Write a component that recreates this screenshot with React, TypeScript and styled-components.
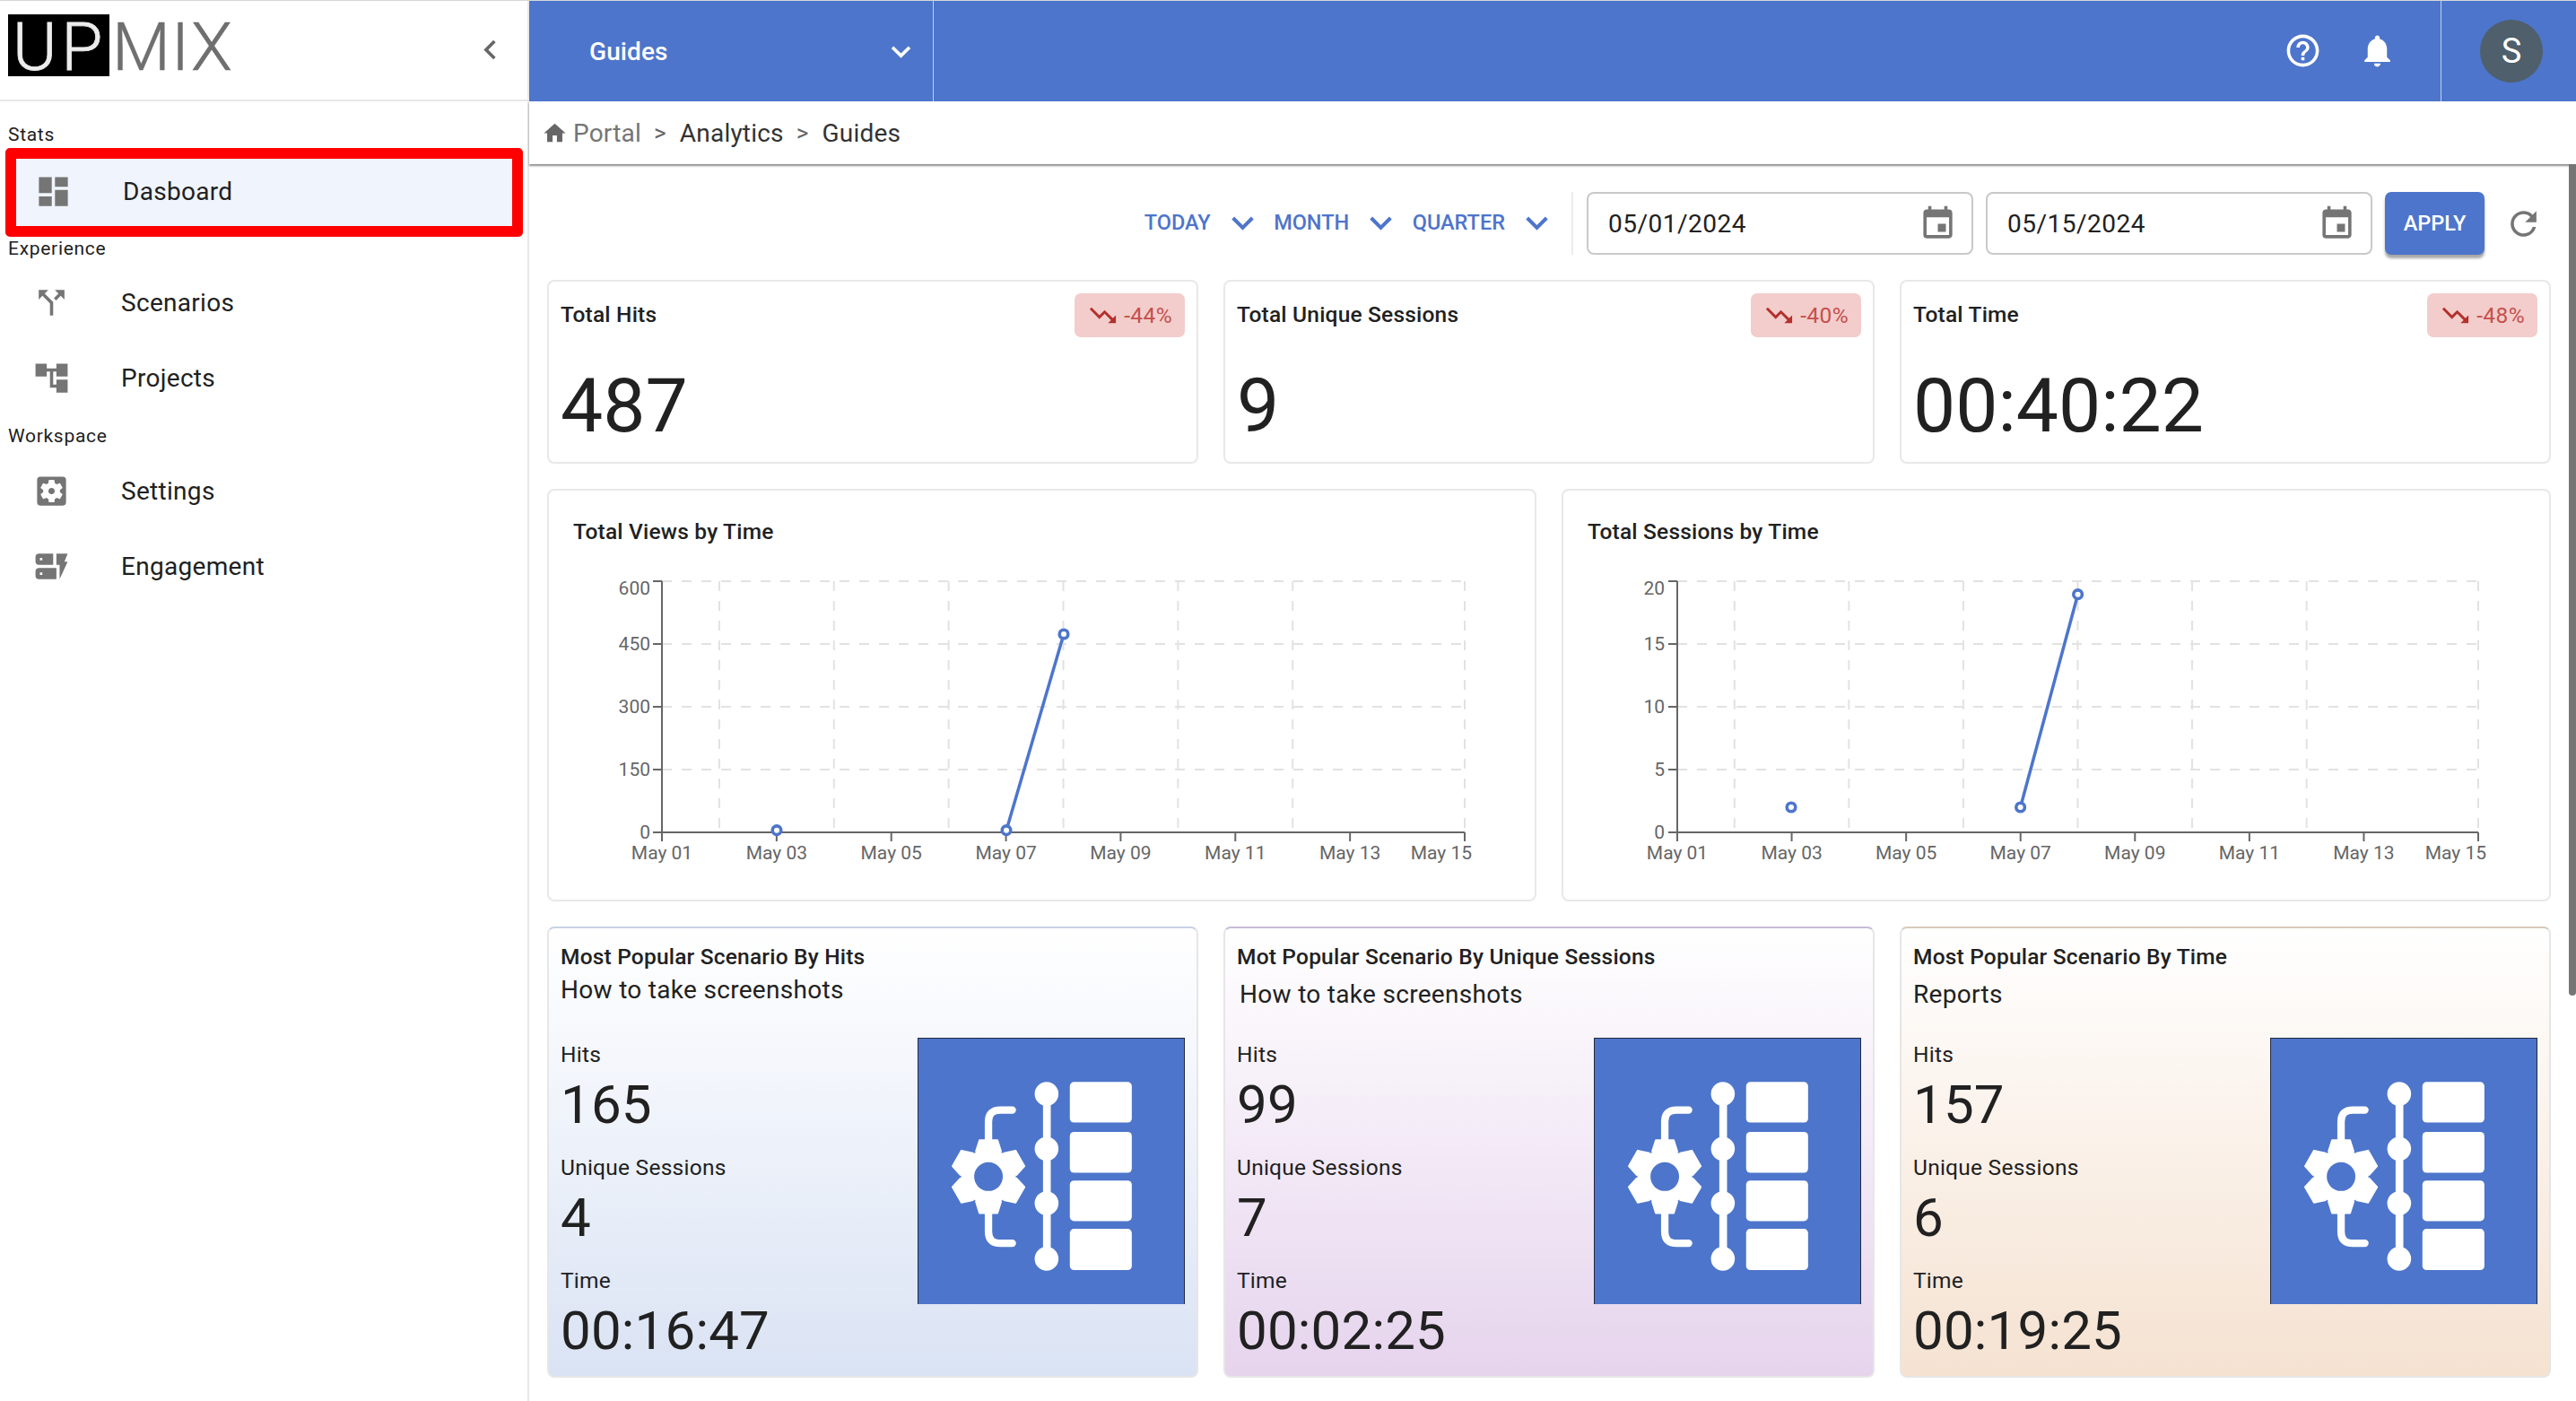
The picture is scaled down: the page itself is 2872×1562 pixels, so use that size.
import React from "react";
import styled, { createGlobalStyle } from "styled-components";
import {
  MdDashboard, MdCallSplit, MdAccountTree, MdSettingsApplications, MdDynamicForm,
  MdHelpOutline, MdNotifications, MdKeyboardArrowDown, MdExpandMore, MdChevronLeft,
  MdHome, MdEvent, MdRefresh, MdTrendingDown,
} from "react-icons/md";

const BLUE = "#4d75cb";

const Global = createGlobalStyle`
  html, body { margin: 0; padding: 0; background: #fff; overflow: hidden; }
  body { font-family: Roboto, "Liberation Sans", sans-serif; color: #212121; }
  * { box-sizing: border-box; }
`;

const Page = styled.div`
  width: 2872px; height: 1562px; display: grid; grid-template-columns: 590px 1fr;
  position: relative; overflow: hidden;
  &::before { content: ""; position: absolute; left: 0; right: 0; top: 0; height: 1px; background: #d6d6d6; z-index: 3; }
`;

const Sidebar = styled.aside`
  border-right: 2px solid #e8e8e8; display: flex; flex-direction: column;
`;
const Brand = styled.div`
  height: 113px; border-bottom: 2px solid #e6e6e6; display: flex; align-items: flex-start;
  justify-content: space-between; padding: 16px 20px 0 9px;
`;
const LogoMark = styled.div`
  display: flex; height: 69px; font-size: 75px; font-weight: 300; line-height: 73px;
`;
const LogoUp = styled.span`
  width: 113px; height: 69px; background: #000; color: #ececec; padding-left: 5px; letter-spacing: 5px; -webkit-text-stroke: .8px #ececec;
`;
const LogoMix = styled.span`
  color: #6f6f6f; margin-left: 3px; letter-spacing: 1.2px; -webkit-text-stroke: .6px #6f6f6f;
`;
const Collapse = styled.span`
  color: #666; margin-top: 18px; display: flex;
  svg { width: 43px; height: 43px; }
`;
const SectionLabel = styled.div<{ $top: number }>`
  font-size: 21px; line-height: 24px; letter-spacing: 0.7px; padding-left: 9px; margin-top: ${p => p.$top}px; color: #212121;
`;
const NavItem = styled.div`
  height: 84px; display: flex; align-items: center; padding-left: 36px; font-size: 28px; letter-spacing: 0.3px; gap: 56px; color: #212121;
  svg { width: 43px; height: 43px; color: #757575; display: block; }
`;
const ActiveNavItem = styled(NavItem)`
  height: 99px; width: 577px; margin: 3px 0 0 6px; border: 12px solid #fe0000; border-radius: 5px;
  background: #f0f4fc; padding: 0 0 2px 20px;
`;
const ItemsTop = styled.div<{ $top: number }>` margin-top: ${p => p.$top}px; `;

const Main = styled.main`
  display: flex; flex-direction: column; position: relative; min-width: 0;
`;
const TopBar = styled.header`
  height: 113px; background: ${BLUE}; display: flex; align-items: stretch; color: #fff;
  svg { display: block; }
`;
const ContextSelect = styled.div`
  width: 451px; border-right: 1px solid rgba(255,255,255,.65); display: flex; align-items: center;
  justify-content: space-between; padding: 2px 14px 0 67px; font-size: 28px; font-weight: 500; letter-spacing: .1px;
  svg { width: 43px; height: 43px; }
`;
const Actions = styled.div`
  margin-left: auto; display: flex; align-items: center; gap: 40px; padding-right: 49px;
  svg { width: 43px; height: 43px; }
`;
const UserBox = styled.div`
  width: 151px; border-left: 1px solid rgba(255,255,255,.65); display: flex; align-items: center; padding-left: 43px;
`;
const Avatar = styled.div`
  width: 70px; height: 70px; border-radius: 50%; background: #4f5f6b; display: flex; align-items: center; justify-content: center;
  font-size: 38px; color: #fff;
`;
const Breadcrumb = styled.nav`
  height: 70px; display: flex; align-items: center; padding-left: 14px; font-size: 28px; color: #333;
  box-shadow: 0 2px 2px rgba(0,0,0,.45); position: relative; z-index: 1; letter-spacing: .2px;
  svg { width: 29px; height: 29px; color: #666; display: block; margin-right: 6px; }
`;
const Crumb = styled.span<{ $muted?: boolean }>` color: ${p => (p.$muted ? "#757575" : "#333")}; `;
const Sep = styled.span` color: #666; margin: 0 15px 0 14px; font-size: 26px; `;

const Thumb = styled.div`
  position: absolute; right: 0; top: 183px; width: 8px; height: 927px; background: #757575; border-radius: 0 0 4px 4px; z-index: 2;
`;

const Content = styled.div`
  padding: 0 28px 0 20px; display: flex; flex-direction: column; gap: 28px;
`;
const Toolbar = styled.div`
  height: 101px; padding-top: 31px; margin-bottom: 28px; display: flex; justify-content: flex-end; align-items: stretch;
`;
const PeriodGroup = styled.div` display: flex; align-items: center; gap: 10.5px; padding-bottom: 2px; `;
const PeriodButton = styled.div`
  display: flex; align-items: center; gap: 11px; color: ${BLUE}; font-size: 23.5px; font-weight: 500;
  svg { width: 49px; height: 49px; display: block; }
`;
const VDivider = styled.div` width: 2px; background: #ececec; margin: 0 15px 0 14px; `;
const DateField = styled.div`
  width: 431px; height: 70px; border: 2px solid #c9c9c9; border-radius: 8px; margin-right: 14px; display: flex; align-items: center;
  justify-content: space-between; padding: 0 16px 0 22px; font-size: 28px; letter-spacing: .5px; color: #212121;
  svg { width: 43px; height: 43px; color: #757575; display: block; }
`;
const ApplyButton = styled.div`
  width: 111px; height: 70px; background: ${BLUE}; color: #fff; border-radius: 7px; font-size: 23.5px; font-weight: 500;
  display: flex; align-items: center; justify-content: center; padding-bottom: 1px;
  box-shadow: 0 4px 3px rgba(0,0,0,.35);
`;
const RefreshButton = styled.div`
  display: flex; align-items: center; margin: 0 9px 0 22px; color: #757575;
  svg { width: 43px; height: 43px; display: block; }
`;

const Row3 = styled.section` display: grid; grid-template-columns: repeat(3, 1fr); gap: 28px; `;
const Row2 = styled.section` display: grid; grid-template-columns: repeat(2, 1fr); gap: 28px; `;

const Card = styled.div`
  border: 2px solid #e8e8e8; border-radius: 8px; background: #fff;
`;
const StatCard = styled(Card)` height: 205px; padding: 13px 13px 0; `;
const StatHead = styled.div` display: flex; justify-content: space-between; align-items: flex-start; height: 49px; `;
const CardTitle = styled.div` font-size: 24.5px; line-height: 29px; font-weight: 500; color: #212121; letter-spacing: .2px; `;
const StatTitle = styled(CardTitle)` padding-top: 9px; `;
const Badge = styled.div`
  height: 49px; padding: 0 14px; border-radius: 7px; background: #f2cdcc; display: flex; align-items: center; gap: 6px;
  color: #c5504c; font-size: 24.5px; letter-spacing: .4px;
  svg { width: 35px; height: 35px; color: #b3302c; display: block; }
`;
const BigNumber = styled.div` font-size: 84px; line-height: 98px; margin-top: 28px; color: #212121; `;

const ChartCard = styled(Card)` height: 460px; `;
const ChartTitle = styled(CardTitle)` padding: 31px 0 0 27px; `;
const ChartFrame = styled.svg` display: block; width: 1097px; height: 340px; margin-top: 34px; overflow: visible; `;

const ScenarioCard = styled(Card)<{ $end: string; $edge: string }>`
  height: 503px; padding: 17px 13px 0; background: linear-gradient(180deg, #fff 0%, ${p => p.$end} 100%); border-color: #e6e6e6; border-top-color: ${p => p.$edge};
`;
const ScenarioHead = styled.div` height: 105px; `;
const Subtitle = styled.div<{ $drop: number; $nudge: number }>`
  font-size: 28px; line-height: 33px; margin-top: ${p => p.$drop}px; margin-left: ${p => p.$nudge}px; letter-spacing: .3px; color: #212121;
`;
const ScenarioBody = styled.div` display: flex; justify-content: space-between; align-items: flex-start; `;
const Metrics = styled.div` padding-top: 4px; `;
const MetricLabel = styled.div` font-size: 24.5px; line-height: 29px; letter-spacing: .25px; color: #212121; `;
const MetricValue = styled.div` font-size: 60px; line-height: 69px; margin: 7px 0 21px; letter-spacing: .2px; color: #212121; `;
const Graphic = styled.svg`
  width: 298px; height: 297px; display: block; background: ${BLUE}; border: 1px solid #232a3a; border-bottom: none; flex: none;
`;

const Gear = () => {
  const teeth = [0, 60, 120, 180, 240, 300];
  return (
    <g fill="#fff">
      {teeth.map(a => (
        <polygon key={a} points="-42,-84 -30,-122 30,-122 42,-84" transform={`translate(305 515) rotate(${a})`} strokeLinejoin="round" stroke="#fff" strokeWidth="6" />
      ))}
      <circle cx="305" cy="515" r="92" />
      <circle cx="305" cy="515" r="48" fill={BLUE} />
    </g>
  );
};

const ScenarioGraphic = () => (
  <Graphic viewBox="70 53 891 889" preserveAspectRatio="none">
    <g fill="#fff">
      <rect x="578" y="198" width="208" height="136" rx="14" />
      <rect x="578" y="365" width="208" height="137" rx="14" />
      <rect x="578" y="528" width="208" height="136" rx="14" />
      <rect x="578" y="690" width="208" height="138" rx="14" />
      <rect x="488" y="238" width="26" height="552" />
      <circle cx="500" cy="238" r="40" />
      <circle cx="500" cy="422" r="40" />
      <circle cx="500" cy="604" r="40" />
      <circle cx="500" cy="790" r="40" />
    </g>
    <path d="M305 400 V330 Q305 292 345 292 H385 M305 630 V700 Q305 738 345 738 H385" fill="none" stroke="#fff" strokeWidth="25" strokeLinecap="round" />
    <Gear />
  </Graphic>
);

type ChartProps = {
  left: number; right: number; yLabels: string[]; labelRight: number;
  points: [number, number][]; lastEdge: number;
};

const DATE_LABELS = ["May 01", "May 03", "May 05", "May 07", "May 09", "May 11", "May 13", "May 15"];

const TimeChart = ({ left, right, yLabels, points, lastEdge, labelRight }: ChartProps) => {
  const top = 7, bottom = 287;
  const step = (right - left) / 14;
  const xOf = (d: number) => left + step * d;
  const gridX = [1, 3, 5, 7, 9, 11, 14].map(xOf);
  const gridY = [0, 1, 2, 3, 4].map(i => top + ((bottom - top) / 4) * i);
  const ticksX = [0, 2, 4, 6, 8, 10, 12, 14].map(xOf);
  const [a, b, c] = points;
  return (
    <ChartFrame viewBox="0 0 1097 340">
      <g stroke="#e2e2e2" strokeWidth="2" strokeDasharray="11 11" fill="none">
        {gridX.map(x => <line key={x} x1={x} y1={top} x2={x} y2={bottom} />)}
        {gridY.map(y => <line key={y} x1={left} y1={y} x2={right} y2={y} />)}
      </g>
      <g stroke="#666" strokeWidth="2" fill="none">
        <line x1={left} y1={top} x2={left} y2={bottom + 10} />
        <line x1={left} y1={bottom} x2={right} y2={bottom} />
        {gridY.map(y => <line key={y} x1={left - 10} y1={y} x2={left} y2={y} />)}
        {ticksX.map(x => <line key={x} x1={x} y1={bottom} x2={x} y2={bottom + 10} />)}
      </g>
      <g fontFamily="Roboto, sans-serif" fontSize="21" fill="#666">
        {yLabels.map((t, i) => (
          <text key={t} x={labelRight} y={i === 0 ? top + 15 : gridY[i] + 7} textAnchor="end">{t}</text>
        ))}
        {DATE_LABELS.map((t, i) => (
          i === 7
            ? <text key={t} x={lastEdge} y={317} textAnchor="end">{t}</text>
            : <text key={t} x={ticksX[i]} y={317} textAnchor="middle">{t}</text>
        ))}
      </g>
      <line x1={b[0]} y1={b[1]} x2={c[0]} y2={c[1]} stroke={BLUE} strokeWidth="3.5" />
      {[a, b, c].map(p => (
        <circle key={p.join()} cx={p[0]} cy={p[1]} r="4.8" fill="#fff" stroke={BLUE} strokeWidth="3.6" />
      ))}
    </ChartFrame>
  );
};

const stats = [
  { title: "Total Hits", delta: "-44%", value: "487" },
  { title: "Total Unique Sessions", delta: "-40%", value: "9" },
  { title: "Total Time", delta: "-48%", value: "00:40:22" },
];

const scenarios = [
  { title: "Most Popular Scenario By Hits", name: "How to take screenshots", hits: "165", sessions: "4", time: "00:16:47", end: "#dae3f4", edge: "#c9d2e4", drop: 6, nudge: 0 },
  { title: "Mot Popular Scenario By Unique Sessions", name: "How to take screenshots", hits: "99", sessions: "7", time: "00:02:25", end: "#e6d4ed", edge: "#c9bcd8", drop: 11, nudge: 3 },
  { title: "Most Popular Scenario By Time", name: "Reports", hits: "157", sessions: "6", time: "00:19:25", end: "#f5e2d1", edge: "#d8cabc", drop: 11, nudge: 0 },
];

export default function App() {
  return (
    <Page>
      <Global />
      <Sidebar>
        <Brand>
          <LogoMark>
            <LogoUp>UP</LogoUp>
            <LogoMix>MIX</LogoMix>
          </LogoMark>
          <Collapse><MdChevronLeft /></Collapse>
        </Brand>
        <SectionLabel $top={25}>Stats</SectionLabel>
        <ActiveNavItem><MdDashboard />Dasboard</ActiveNavItem>
        <SectionLabel $top={1}>Experience</SectionLabel>
        <ItemsTop $top={6}>
          <NavItem><MdCallSplit />Scenarios</NavItem>
          <NavItem><MdAccountTree />Projects</NavItem>
        </ItemsTop>
        <SectionLabel $top={11}>Workspace</SectionLabel>
        <ItemsTop $top={7}>
          <NavItem><MdSettingsApplications />Settings</NavItem>
          <NavItem><MdDynamicForm />Engagement</NavItem>
        </ItemsTop>
      </Sidebar>
      <Main>
        <TopBar>
          <ContextSelect>Guides<MdKeyboardArrowDown /></ContextSelect>
          <Actions><MdHelpOutline /><MdNotifications /></Actions>
          <UserBox><Avatar>S</Avatar></UserBox>
        </TopBar>
        <Breadcrumb>
          <MdHome />
          <Crumb $muted>Portal</Crumb><Sep>&gt;</Sep>
          <Crumb>Analytics</Crumb><Sep>&gt;</Sep>
          <Crumb>Guides</Crumb>
        </Breadcrumb>
        <Thumb />
        <Content>
          <div>
            <Toolbar>
              <PeriodGroup>
                <PeriodButton>TODAY<MdExpandMore /></PeriodButton>
                <PeriodButton>MONTH<MdExpandMore /></PeriodButton>
                <PeriodButton>QUARTER<MdExpandMore /></PeriodButton>
              </PeriodGroup>
              <VDivider />
              <DateField>05/01/2024<MdEvent /></DateField>
              <DateField>05/15/2024<MdEvent /></DateField>
              <ApplyButton>APPLY</ApplyButton>
              <RefreshButton><MdRefresh /></RefreshButton>
            </Toolbar>
            <Row3>
              {stats.map(s => (
                <StatCard key={s.title}>
                  <StatHead>
                    <StatTitle>{s.title}</StatTitle>
                    <Badge><MdTrendingDown />{s.delta}</Badge>
                  </StatHead>
                  <BigNumber>{s.value}</BigNumber>
                </StatCard>
              ))}
            </Row3>
          </div>
          <Row2>
            <ChartCard>
              <ChartTitle>Total Views by Time</ChartTitle>
              <TimeChart left={126} right={1021} labelRight={113} lastEdge={1029}
                yLabels={["600", "450", "300", "150", "0"]}
                points={[[254, 284.7], [510, 284.7], [574, 66]]} />
            </ChartCard>
            <ChartCard>
              <ChartTitle>Total Sessions by Time</ChartTitle>
              <TimeChart left={127} right={1020} labelRight={113} lastEdge={1029}
                yLabels={["20", "15", "10", "5", "0"]}
                points={[[254, 259], [509.6, 259], [573.6, 21.7]]} />
            </ChartCard>
          </Row2>
          <Row3>
            {scenarios.map(s => (
              <ScenarioCard key={s.title} $end={s.end} $edge={s.edge}>
                <ScenarioHead>
                  <CardTitle>{s.title}</CardTitle>
                  <Subtitle $drop={s.drop} $nudge={s.nudge}>{s.name}</Subtitle>
                </ScenarioHead>
                <ScenarioBody>
                  <Metrics>
                    <MetricLabel>Hits</MetricLabel>
                    <MetricValue>{s.hits}</MetricValue>
                    <MetricLabel>Unique Sessions</MetricLabel>
                    <MetricValue>{s.sessions}</MetricValue>
                    <MetricLabel>Time</MetricLabel>
                    <MetricValue>{s.time}</MetricValue>
                  </Metrics>
                  <ScenarioGraphic />
                </ScenarioBody>
              </ScenarioCard>
            ))}
          </Row3>
        </Content>
      </Main>
    </Page>
  );
}
